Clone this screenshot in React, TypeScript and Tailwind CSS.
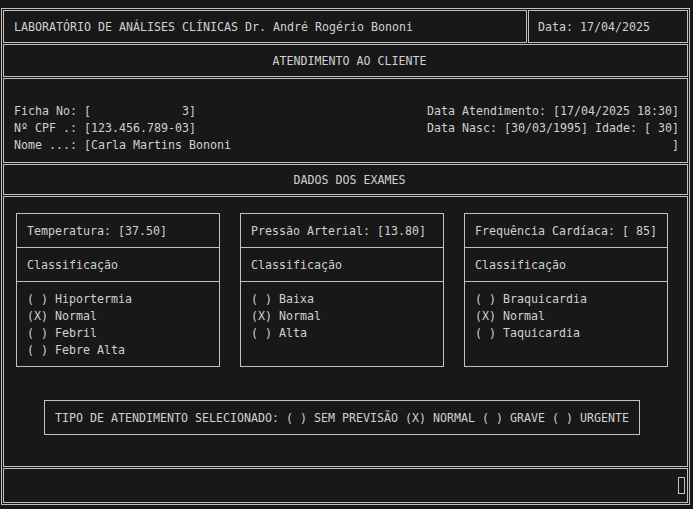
export default function App() {
  const exams = [
    {
      title: "Temperatura: [37.50]",
      options: ["( ) Hiportermia", "(X) Normal", "( ) Febril", "( ) Febre Alta"],
    },
    {
      title: "Pressão Arterial: [13.80]",
      options: ["( ) Baixa", "(X) Normal", "( ) Alta"],
    },
    {
      title: "Frequência Cardíaca: [ 85]",
      options: ["( ) Braquicardia", "(X) Normal", "( ) Taquicardia"],
    },
  ];

  return (
    <div className="w-[693px] h-[509px] overflow-hidden bg-[#181818] pt-[8px] pl-[1px] font-['DejaVu_Sans_Mono','Liberation_Mono',monospace] text-[11.63px] leading-[17px] text-[#d0d0d0] whitespace-pre">
      <div className="w-[689px] h-[497px] border border-[#c0c0c0] p-[1px] flex flex-col gap-[1px]">
        {/* Header */}
        <div className="flex gap-[1px] h-[33px]">
          <div className="w-[524px] border border-[#c0c0c0] flex items-center pt-[2px] pl-[10px]">
            LABORATÓRIO DE ANÁLISES CLÍNICAS Dr. André Rogério Bononi
          </div>
          <div className="flex-1 border border-[#c0c0c0] flex items-center pt-[2px] pl-[9px]">
            Data: 17/04/2025
          </div>
        </div>

        {/* Title */}
        <div className="h-[33px] border border-[#c0c0c0] flex items-center justify-center pt-[2px] pl-[8px]">
          ATENDIMENTO AO CLIENTE
        </div>

        {/* Client info */}
        <div className="h-[85px] border border-[#c0c0c0] flex justify-between pt-[24px] pl-[10px] pr-[8px]">
          <div className="flex flex-col">
            <span>Ficha No: [             3]</span>
            <span>Nº CPF .: [123.456.789-03]</span>
            <span>Nome ...: [Carla Martins Bononi</span>
          </div>
          <div className="flex flex-col items-end">
            <span>Data Atendimento: [17/04/2025 18:30]</span>
            <span>Data Nasc: [30/03/1995] Idade: [ 30]</span>
            <span>]</span>
          </div>
        </div>

        {/* Section title */}
        <div className="h-[31px] border border-[#c0c0c0] flex items-center justify-center pt-[2px] pl-[8px]">
          DADOS DOS EXAMES
        </div>

        {/* Exams */}
        <div className="h-[271px] border border-[#c0c0c0] pt-[16px] pl-[12px] flex flex-col">
          <div className="flex gap-[20px]">
            {exams.map((exam) => (
              <div key={exam.title} className="w-[204px] h-[154px] border border-[#c0c0c0] flex flex-col">
                <div className="h-[33px] flex items-center pt-[2px] pl-[10px]">{exam.title}</div>
                <div className="h-[34px] border-t border-[#c0c0c0] flex items-center pt-[2px] pl-[10px]">
                  Classificação
                </div>
                <div className="flex-1 border-t border-[#c0c0c0] pt-[9px] pl-[10px] flex flex-col">
                  {exam.options.map((opt) => (
                    <span key={opt}>{opt}</span>
                  ))}
                </div>
              </div>
            ))}
          </div>

          <div className="mt-[33px] ml-[28px] w-[596px] h-[35px] border border-[#c0c0c0] flex items-center pt-[2px] pl-[10px]">
            TIPO DE ATENDIMENTO SELECIONADO: ( ) SEM PREVISÃO (X) NORMAL ( ) GRAVE ( ) URGENTE
          </div>
        </div>

        {/* Status line */}
        <div className="flex-1 border border-[#c0c0c0] flex justify-end items-start pt-[8px] pr-[2px]">
          <div className="w-[7px] h-[17px] border border-[#c0c0c0]" />
        </div>
      </div>
    </div>
  );
}
